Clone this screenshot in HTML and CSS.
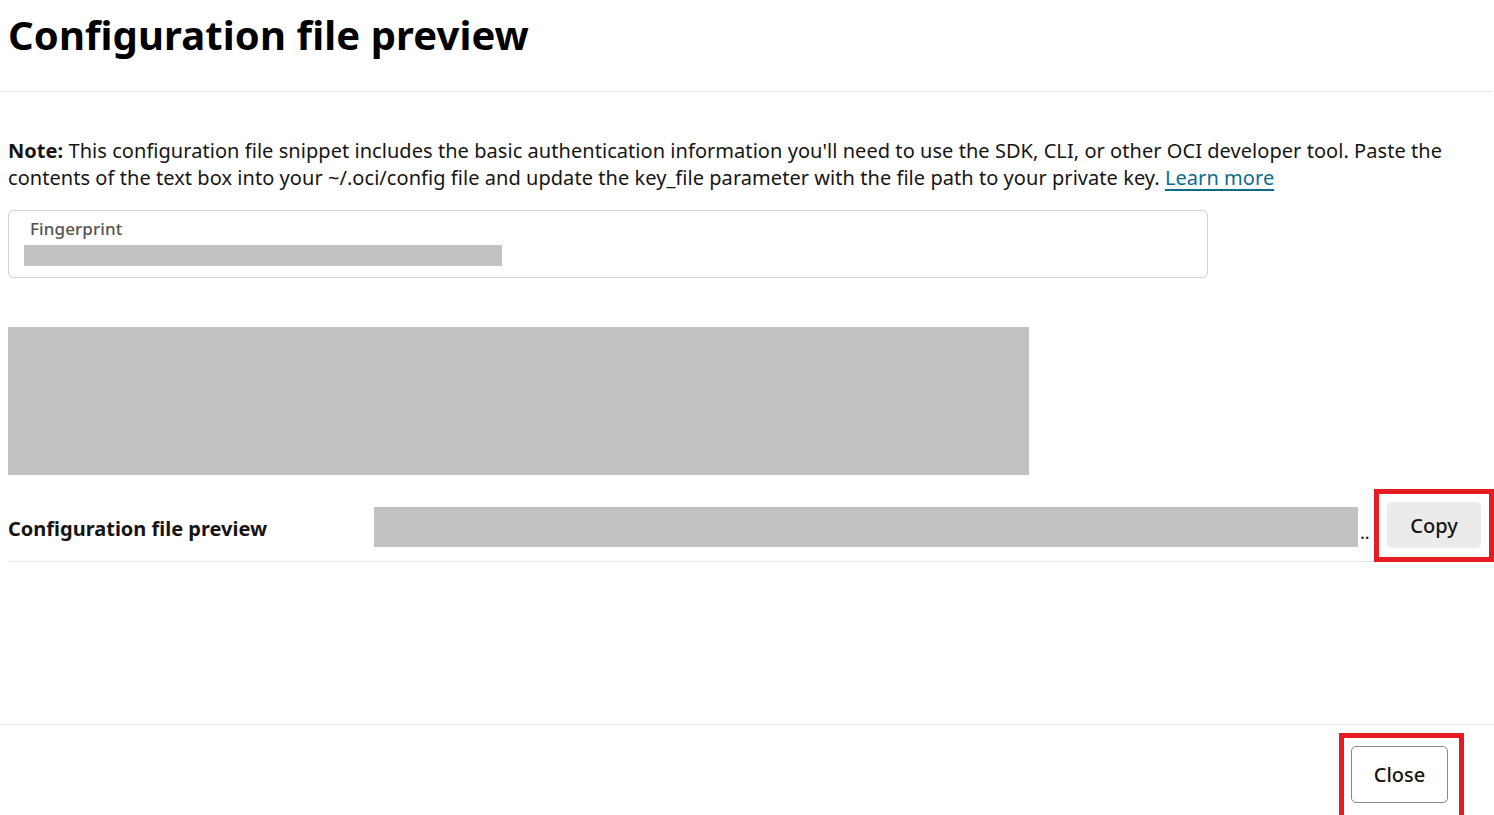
FILE: index.html
```html
<!DOCTYPE html>
<html lang="en">
<head>
<meta charset="utf-8">
<title>Configuration file preview</title>
<link rel="stylesheet" href="styles.css">
</head>
<body>
<div class="dialog">
  <header class="header">
    <h1 class="title">Configuration file preview</h1>
  </header>
  <main class="content">
    <p class="note"><strong>Note:</strong> This configuration file snippet includes the basic authentication information you'll need to use the SDK, CLI, or other OCI developer tool. Paste the contents of the text box into your ~/.oci/config file and update the key_file parameter with the file path to your private key. <a href="#" class="link">Learn more</a></p>
    <div class="field">
      <div class="field-label">Fingerprint</div>
      <div class="field-value"></div>
    </div>
    <div class="redacted-block"></div>
    <div class="preview-row">
      <div class="preview-label">Configuration file preview</div>
      <div class="preview-value"></div>
      <span class="ellipsis">..</span>
      <span class="highlight highlight-copy"><button class="btn btn-copy">Copy</button></span>
    </div>
  </main>
  <footer class="footer">
    <span class="highlight highlight-close"><button class="btn btn-close">Close</button></span>
  </footer>
</div>
</body>
</html>
```
FILE: styles.css
```css
html, body {
  margin: 0;
  padding: 0;
  background: #fff;
}
body {
  font-family: "Noto Sans", "Open Sans", sans-serif;
  color: #161513;
  overflow: hidden;
}
.dialog {
  width: 1494px;
  height: 815px;
  display: flex;
  flex-direction: column;
}
.header {
  width: 1491px;
  height: 92px;
  border-bottom: 1px solid #e4e4e4;
  box-sizing: border-box;
  padding: 10px 8px 0;
}
.title {
  margin: 0;
  font-size: 40px;
  font-weight: 700;
  line-height: 50px;
  color: #000;
  letter-spacing: 0.1px;
}
.content {
  padding: 0 0 0 8px;
  flex: 1;
}
.note {
  margin: 45px 0 0;
  font-size: 20px;
  line-height: 27px;
  width: 1460px;
  color: #161513;
  letter-spacing: 0.05px;
}
.note strong {
  font-weight: 700;
}
.link {
  color: #0f6b8c;
  text-decoration: underline;
  text-underline-offset: 4px;
  text-decoration-thickness: 2px;
}
.field {
  margin-top: 19px;
  width: 1200px;
  height: 68px;
  box-sizing: border-box;
  border: 1px solid #d4d4d3;
  border-radius: 5px;
  padding: 6px 0 0 15px;
}
.field-label {
  font-size: 17px;
  font-weight: 500;
  line-height: 24px;
  color: #55534f;
  padding-left: 6px;
  letter-spacing: 0.1px;
}
.field-value {
  margin-top: 4px;
  width: 478px;
  height: 21px;
  background: #c2c2c2;
}
.redacted-block {
  margin-top: 49px;
  width: 1021px;
  height: 148px;
  background: #c2c2c2;
}
.preview-row {
  margin-top: 14px;
  display: flex;
  align-items: center;
  height: 72px;
  border-bottom: 1px solid #e4e4e4;
}
.preview-label {
  width: 367px;
  font-size: 20px;
  font-weight: 700;
  color: #161513;
  letter-spacing: 0;
  padding-top: 6px;
}
.preview-value {
  width: 985px;
  height: 40px;
  background: #c2c2c2;
  margin-top: 4px;
}
.ellipsis {
  font-size: 18px;
  width: 14px;
  padding-left: 2px;
  align-self: center;
  margin-top: 14px;
  color: #161513;
}
.highlight {
  display: inline-flex;
  border: 5px solid #e51c23;
  background: #fff;
}
.highlight-copy {
  padding: 8px 8px 9px 8px;
  align-self: flex-start;
}
.btn {
  font-family: "Noto Sans", "Open Sans", sans-serif;
  font-size: 20px;
  font-weight: 500;
  color: #161513;
  cursor: pointer;
  border-radius: 5px;
}
.btn-copy {
  width: 94px;
  height: 46px;
  background: #ebebea;
  border: none;
}
.footer {
  border-top: 1px solid #e4e4e4;
  height: 91px;
  box-sizing: border-box;
  display: flex;
  justify-content: flex-end;
  padding: 8px 30px 0 0;
}
.highlight-close {
  padding: 8px 11px 8px 7px;
  align-self: flex-start;
  border-bottom: none;
  height: 82px;
  box-sizing: border-box;
}
.btn-close {
  width: 97px;
  height: 57px;
  background: #fff;
  border: 1px solid #8a8987;
}
```
